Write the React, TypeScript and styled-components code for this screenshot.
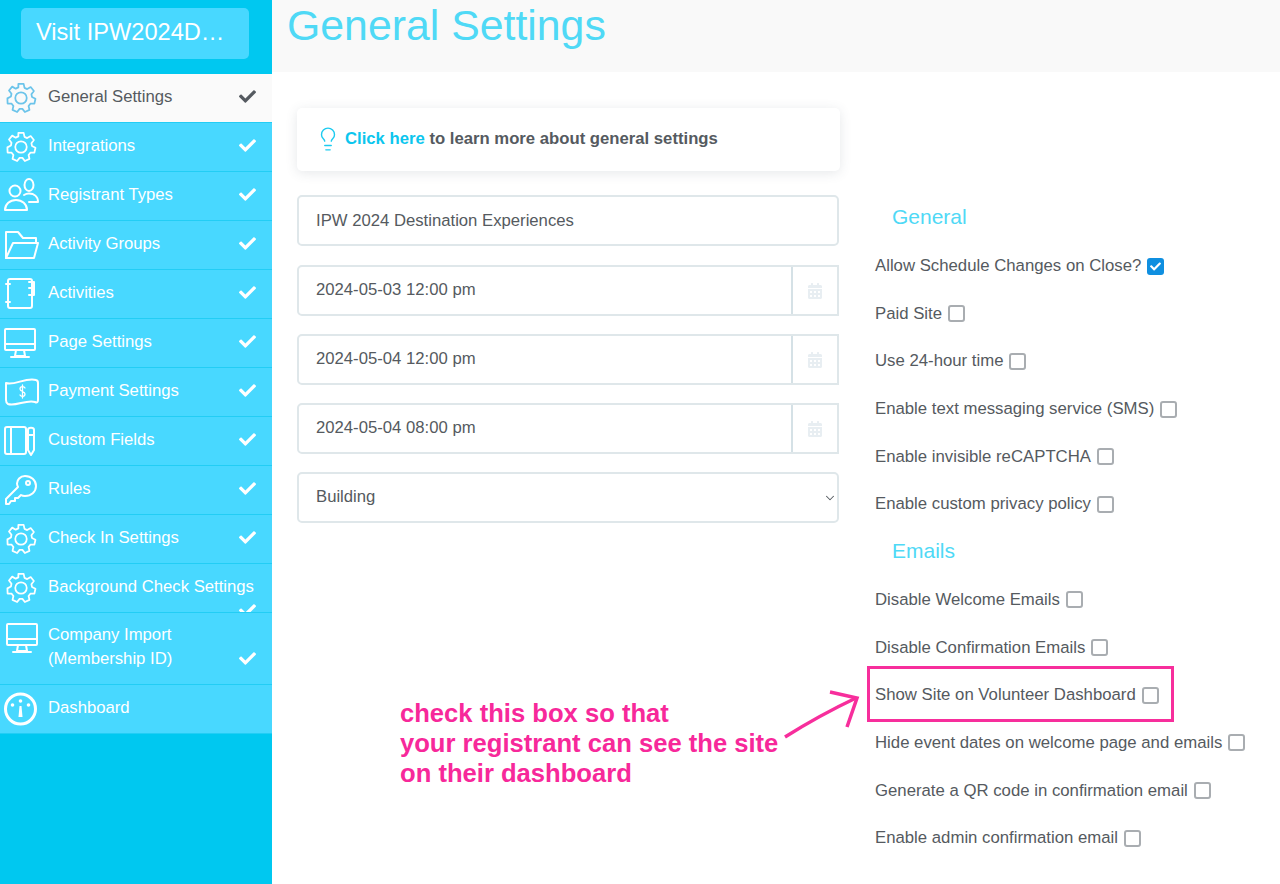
import styled, { createGlobalStyle } from 'styled-components'
import { FaCalendarAlt, FaCheck } from 'react-icons/fa'
import { ChevronDown, Lightbulb } from 'lucide-react'

const GlobalStyle = createGlobalStyle`
  html, body {
    margin: 0;
    height: 884px;
    overflow: hidden;
    background: #fff;
    font-family: 'Liberation Sans', Arial, sans-serif;
    color: #555a60;
  }
`

const Page = styled.div`
  position: relative;
  display: grid;
  grid-template-columns: 272px 1fr;
  height: 884px;
`

const Sidebar = styled.aside`
  background: #00c8f0;
  display: flex;
  flex-direction: column;
`

const VisitWrap = styled.div`
  height: 74px;
  padding: 8px 23px 0 21px;
  box-sizing: border-box;
`

const VisitButton = styled.div`
  height: 51px;
  line-height: 48px;
  padding-left: 15px;
  border-radius: 5px;
  background: #48d8ff;
  color: #fff;
  font-size: 23.6px;
  white-space: nowrap;
`

const Row = styled.div<{ $active?: boolean; $tall?: boolean }>`
  height: ${({ $tall }) => ($tall ? 72 : 49)}px;
  box-sizing: border-box;
  padding: ${({ $tall }) => ($tall ? 10 : 11)}px 16px 0 4px;
  display: flex;
  flex-wrap: wrap;
  align-items: flex-start;
  overflow: hidden;
  background: ${({ $active }) => ($active ? '#fafafa' : '#48d8ff')};
  border-bottom: 1px solid #22cdf5;
  color: ${({ $active }) => ($active ? '#555a60' : '#fff')};
  font-size: 16.7px;
  line-height: 24px;
`

const IconBox = styled.span<{ $color: string; $lift: number; $inset: number }>`
  width: 44px;
  height: 24px;
  flex: none;
  color: ${({ $color }) => $color};
  svg {
    display: block;
    margin-top: ${({ $lift }) => -$lift}px;
    margin-left: ${({ $inset }) => $inset}px;
    overflow: visible;
  }
`

const RowLabel = styled.span`
  flex: none;
`

const RowCheck = styled.span<{ $bottom?: boolean }>`
  margin-left: auto;
  height: 24px;
  margin-top: -1px;
  display: flex;
  align-items: center;
  align-self: ${({ $bottom }) => ($bottom ? 'flex-end' : 'flex-start')};
  margin-bottom: ${({ $bottom }) => ($bottom ? '14px' : '0')};
  font-size: 17px;
`

const Main = styled.main`
  display: flex;
  flex-direction: column;
  min-width: 0;
`

const Header = styled.header`
  height: 72px;
  background: #f9f9f9;
  padding-left: 15px;
  box-sizing: border-box;
`

const Title = styled.h1`
  margin: 0;
  font-size: 42.8px;
  font-weight: 400;
  line-height: 50px;
  color: #4fd9f6;
`

const Content = styled.div`
  display: grid;
  grid-template-columns: 543px 1fr;
  column-gap: 35px;
  padding: 36px 0 0 25px;
`

const LeftColumn = styled.div`
  display: flex;
  flex-direction: column;
  gap: 18px;
`

const HintCard = styled.div`
  height: 63px;
  margin-bottom: 6px;
  border-radius: 5px;
  background: #fff;
  box-shadow: 0 2px 12px rgba(60, 80, 90, 0.13);
  display: flex;
  align-items: center;
  gap: 4px;
  padding: 0 0 2px 18px;
  box-sizing: border-box;
  font-size: 16.7px;
  font-weight: 700;
  color: #555a60;
  svg {
    color: #1ccbf0;
  }
`

const HintLink = styled.span`
  color: #0cc6ee;
`

const TextField = styled.div`
  height: 51px;
  margin: 0 1px 1px 0;
  box-sizing: border-box;
  border: 2px solid #dfe7ea;
  border-radius: 5px;
  padding-left: 17px;
  display: flex;
  align-items: center;
  font-size: 16.7px;
`

const DateGroup = styled.div`
  height: 51px;
  margin-right: 1px;
  box-sizing: border-box;
  border: 2px solid #dfe7ea;
  border-radius: 5px 0 0 5px;
  display: flex;
  align-items: center;
  font-size: 16.7px;
  padding-left: 17px;
`

const DateValue = styled.span`
  flex: 1;
  padding-bottom: 1px;
`

const CalendarAddon = styled.span`
  width: 46px;
  height: 100%;
  box-sizing: border-box;
  border-left: 2px solid #d5e1e6;
  display: flex;
  align-items: center;
  justify-content: center;
  color: #e8eef2;
  font-size: 16px;
`

const SelectWrap = styled.div`
  position: relative;
  height: 51px;
  margin-right: 1px;
  color: #555a60;
`

const StatusSelect = styled.select`
  width: 100%;
  height: 100%;
  box-sizing: border-box;
  appearance: none;
  border: 2px solid #dfe7ea;
  border-radius: 5px;
  background: #fff;
  padding: 0 0 2px 17px;
  color: #555a60;
  font-family: inherit;
  font-size: 16.7px;
`

const SelectChevron = styled.span`
  position: absolute;
  right: 2px;
  top: 19px;
  pointer-events: none;
  svg {
    display: block;
  }
`

const RightColumn = styled.div`
  display: flex;
  flex-direction: column;
  padding-top: 85px;
`

const SectionTitle = styled.h3`
  margin: 0;
  padding-left: 17px;
  height: 47.7px;
  line-height: 47.7px;
  font-size: 21px;
  font-weight: 400;
  color: #4fd9f6;
`

const OptionRow = styled.label`
  height: 47.7px;
  box-sizing: border-box;
  padding-top: 3px;
  display: flex;
  align-items: center;
  gap: 6px;
  font-size: 16.75px;
  white-space: nowrap;
`

const Box = styled.span<{ $checked?: boolean }>`
  width: 17px;
  height: 17px;
  box-sizing: border-box;
  border-radius: 3px;
  border: ${({ $checked }) => ($checked ? 'none' : '2px solid #a9adb1')};
  background: ${({ $checked }) => ($checked ? '#0f8fe0' : '#fff')};
  color: #fff;
  display: flex;
  align-items: center;
  justify-content: center;
  font-size: 11px;
`

const Highlight = styled.div`
  position: absolute;
  left: 867px;
  top: 666px;
  width: 307px;
  height: 56px;
  box-sizing: border-box;
  border: 3px solid #f72e9c;
`

const Note = styled.div`
  position: absolute;
  left: 400px;
  top: 698px;
  color: #f7289a;
  font-size: 25.6px;
  font-weight: 700;
  line-height: 30px;
  white-space: nowrap;
`

const NoteArrow = styled.svg`
  position: absolute;
  left: 780px;
  top: 685px;
`

const iconProps = { fill: 'none', stroke: 'currentColor', strokeWidth: 2, strokeLinecap: 'round', strokeLinejoin: 'round' } as const

// cog with eight rounded teeth
const Cog = () => (
  <svg width="30" height="30" viewBox="0 0 34 34" {...iconProps}>
    <path d="M14 1h6l1 4.500 3 1.400 4-2.300 3.600 4.400-2.800 3.700.6 3.100 4 2.100-1.200 5.400-4.600.2-2 2.600 1 4.400-5.200 2.400-2.800-3.600h-3.200l-2.800 3.600-5.200-2.400 1-4.400-2-2.600-4.600-.2L1.600 17.400l4-2.100.6-3.100L3.400 8.500 7 4.100l4 2.300 3-1.400z" />
    <circle cx="17" cy="17" r="6.500" />
  </svg>
)

const People = () => (
  <svg width="35" height="33" viewBox="0 0 35 33" {...iconProps}>
    <circle cx="11" cy="13" r="5.500" />
    <ellipse cx="25" cy="7" rx="4.500" ry="6" />
    <path d="M1 32c0-6 5-10 11-10s11 4 11 10z" />
    <path d="M20 17c1.500-1 3-1.500 5-1.500 5 0 9 3 9 8.500h-9" />
  </svg>
)

const Folder = () => (
  <svg width="35" height="30" viewBox="0 0 35 30" {...iconProps}>
    <path d="M2 28V2h12l5 6h13v5" />
    <path d="M2 28h28l4-15H9z" />
  </svg>
)

const Notebook = () => (
  <svg width="31" height="31" viewBox="0 0 31 31" {...iconProps}>
    <rect x="3" y="1" width="24" height="29" rx="2" />
    <path d="M1 6h4M1 24h4M24 4h5v13h-5M24 10h5" />
  </svg>
)

const Screen = () => (
  <svg width="32" height="30" viewBox="0 0 32 30" {...iconProps}>
    <rect x="1" y="1" width="30" height="21" rx="1" />
    <path d="M1 16h30M12 22l-1 6h10l-1-6M7 29h18" />
  </svg>
)

const Money = () => (
  <svg width="36" height="30" viewBox="0 0 36 30" {...iconProps}>
    <path d="M2 6c8 3 20-6 30-3 2 .5 2 2 2 3v17c0 2-1 3-3 2-8-3-20 5-27 2-2-1-2-2-2-4z" />
    <path d="M21 11c-1-2-5-2-5 1s5 2 5 5-4 3-5 1M18.500 8v13" strokeWidth="1.300" />
  </svg>
)

const Journal = () => (
  <svg width="31" height="30" viewBox="0 0 31 30" {...iconProps}>
    <rect x="1" y="1" width="21" height="27" rx="2" />
    <path d="M7 1v27M24 4c0-3 6-3 6 0v20l-3 5-3-5zM24 9h6" />
  </svg>
)

const KeyIcon = () => (
  <svg width="32" height="30" viewBox="0 0 32 30" {...iconProps}>
    <path d="M20 1c6 0 11 4 11 10s-5 10-11 10c-1.500 0-3-.3-4-1l-3 3h-3v3H6l-2 3H1v-5l12-12c-.5-1-1-2-1-3.500C12 5 15 1 20 1z" />
    <circle cx="23" cy="8" r="2" />
  </svg>
)

const Gauge = () => (
  <svg width="33" height="32" viewBox="0 0 33 32">
    <circle cx="16.500" cy="16" r="15" fill="none" stroke="currentColor" strokeWidth="3" />
    <path d="M15.500 13h2l1 11h-4z" fill="currentColor" />
    <circle cx="16.500" cy="8" r="1.800" fill="currentColor" />
    <circle cx="8.500" cy="12" r="1.800" fill="currentColor" />
    <circle cx="24.500" cy="12" r="1.800" fill="currentColor" />
  </svg>
)

const menu = [
  { label: 'General Settings', icon: <Cog />, lift: 2, inset: 2, active: true },
  { label: 'Integrations', icon: <Cog />, lift: 2, inset: 2 },
  { label: 'Registrant Types', icon: <People />, lift: 5, inset: 0 },
  { label: 'Activity Groups', icon: <Folder />, lift: 2, inset: 0 },
  { label: 'Activities', icon: <Notebook />, lift: 3, inset: 1 },
  { label: 'Page Settings', icon: <Screen />, lift: 2, inset: 0 },
  { label: 'Payment Settings', icon: <Money />, lift: 2, inset: 0 },
  { label: 'Custom Fields', icon: <Journal />, lift: 2, inset: 0 },
  { label: 'Rules', icon: <KeyIcon />, lift: 2, inset: 1 },
  { label: 'Check In Settings', icon: <Cog />, lift: 2, inset: 2 },
  { label: 'Background Check Settings', icon: <Cog />, lift: 2, inset: 2 },
]

const generalOptions = [
  { label: 'Allow Schedule Changes on Close?', checked: true },
  { label: 'Paid Site' },
  { label: 'Use 24-hour time' },
  { label: 'Enable text messaging service (SMS)' },
  { label: 'Enable invisible reCAPTCHA' },
  { label: 'Enable custom privacy policy' },
]

const emailOptions = [
  'Disable Welcome Emails',
  'Disable Confirmation Emails',
  'Show Site on Volunteer Dashboard',
  'Hide event dates on welcome page and emails',
  'Generate a QR code in confirmation email',
  'Enable admin confirmation email',
]

const dates = ['2024-05-03 12:00 pm', '2024-05-04 12:00 pm', '2024-05-04 08:00 pm']

const App = () => {
  return (
    <Page>
      <GlobalStyle />
      <Sidebar>
        <VisitWrap>
          <VisitButton>Visit IPW2024D…</VisitButton>
        </VisitWrap>
        {menu.map((item) => (
          <Row key={item.label} $active={item.active}>
            <IconBox $color={item.active ? '#6cc4ea' : '#fff'} $lift={item.lift} $inset={item.inset}>
              {item.icon}
            </IconBox>
            <RowLabel>{item.label}</RowLabel>
            <RowCheck>
              <FaCheck />
            </RowCheck>
          </Row>
        ))}
        <Row $tall>
          <IconBox $color="#fff" $lift={0} $inset={2}>
            <Screen />
          </IconBox>
          <RowLabel>
            Company Import
            <br />
            (Membership ID)
          </RowLabel>
          <RowCheck $bottom>
            <FaCheck />
          </RowCheck>
        </Row>
        <Row>
          <IconBox $color="#fff" $lift={3} $inset={0}>
            <Gauge />
          </IconBox>
          <RowLabel>Dashboard</RowLabel>
        </Row>
      </Sidebar>
      <Main>
        <Header>
          <Title>General Settings</Title>
        </Header>
        <Content>
          <LeftColumn>
            <HintCard>
              <Lightbulb size={26} strokeWidth={1.3} />
              <span>
                <HintLink>Click here</HintLink> to learn more about general settings
              </span>
            </HintCard>
            <TextField>IPW 2024 Destination Experiences</TextField>
            {dates.map((date, i) => (
              <DateGroup key={i}>
                <DateValue>{date}</DateValue>
                <CalendarAddon>
                  <FaCalendarAlt />
                </CalendarAddon>
              </DateGroup>
            ))}
            <SelectWrap>
              <StatusSelect defaultValue="Building">
                <option>Building</option>
              </StatusSelect>
              <SelectChevron>
                <ChevronDown size={14} strokeWidth={1.8} />
              </SelectChevron>
            </SelectWrap>
          </LeftColumn>
          <RightColumn>
            <SectionTitle>General</SectionTitle>
            {generalOptions.map((opt) => (
              <OptionRow key={opt.label}>
                {opt.label}
                <Box $checked={opt.checked}>{opt.checked && <FaCheck />}</Box>
              </OptionRow>
            ))}
            <SectionTitle>Emails</SectionTitle>
            {emailOptions.map((label) => (
              <OptionRow key={label}>
                {label}
                <Box />
              </OptionRow>
            ))}
          </RightColumn>
        </Content>
      </Main>
      <Highlight />
      <Note>
        check this box so that
        <br />
        your registrant can see the site
        <br />
        on their dashboard
      </Note>
      <NoteArrow width="84" height="60" viewBox="0 0 84 60" fill="none" stroke="#f72e9c" strokeWidth="3.500">
        <path d="M5 52Q40 30 76 13" />
        <path d="M50 7L77 13L67 42" />
      </NoteArrow>
    </Page>
  )
}

export default App
